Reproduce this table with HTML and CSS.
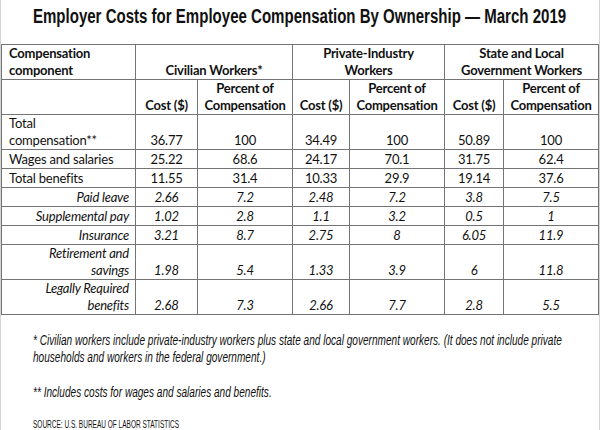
FILE: index.html
```html
<!DOCTYPE html>
<html>
<head>
<meta charset="utf-8">
<link rel="stylesheet" href="styles.css">
</head>
<body>
<div class="page">
  <div class="title-wrap">
    <h1 class="title">Employer Costs for Employee Compensation By Ownership — March 2019</h1>
  </div>
  <table class="grid">
    <colgroup>
      <col class="c-label"><col class="c-cost1"><col class="c-pct"><col class="c-cost2"><col class="c-pct"><col class="c-cost3"><col class="c-pct">
    </colgroup>
    <thead>
      <tr class="h2">
        <th class="lab">Compensation<br>component</th>
        <th colspan="2">Civilian Workers*</th>
        <th colspan="2">Private-Industry<br>Workers</th>
        <th colspan="2">State and Local<br>Government Workers</th>
      </tr>
      <tr class="h2">
        <th></th>
        <th>Cost ($)</th><th>Percent of<br>Compensation</th>
        <th>Cost ($)</th><th>Percent of<br>Compensation</th>
        <th>Cost ($)</th><th>Percent of<br>Compensation</th>
      </tr>
    </thead>
    <tbody>
      <tr class="h2"><td class="lab">Total<br>compensation**</td><td>36.77</td><td>100</td><td>34.49</td><td>100</td><td>50.89</td><td>100</td></tr>
      <tr><td class="lab">Wages and salaries</td><td>25.22</td><td>68.6</td><td>24.17</td><td>70.1</td><td>31.75</td><td>62.4</td></tr>
      <tr><td class="lab">Total benefits</td><td>11.55</td><td>31.4</td><td>10.33</td><td>29.9</td><td>19.14</td><td>37.6</td></tr>
      <tr class="sub"><td class="lab">Paid leave</td><td>2.66</td><td>7.2</td><td>2.48</td><td>7.2</td><td>3.8</td><td>7.5</td></tr>
      <tr class="sub"><td class="lab">Supplemental pay</td><td>1.02</td><td>2.8</td><td>1.1</td><td>3.2</td><td>0.5</td><td>1</td></tr>
      <tr class="sub"><td class="lab">Insurance</td><td>3.21</td><td>8.7</td><td>2.75</td><td>8</td><td>6.05</td><td>11.9</td></tr>
      <tr class="sub h2"><td class="lab">Retirement and<br>savings</td><td>1.98</td><td>5.4</td><td>1.33</td><td>3.9</td><td>6</td><td>11.8</td></tr>
      <tr class="sub h2"><td class="lab">Legally Required<br>benefits</td><td>2.68</td><td>7.3</td><td>2.66</td><td>7.7</td><td>2.8</td><td>5.5</td></tr>
    </tbody>
  </table>
  <div class="notes">
    <p class="note">* Civilian workers include private-industry workers plus state and local government workers. (It does not include private<br>households and workers in the federal government.)</p>
    <p class="note">** Includes costs for wages and salaries and benefits.</p>
    <p class="source">SOURCE: U.S. BUREAU OF LABOR STATISTICS</p>
  </div>
</div>
</body>
</html>
```
FILE: styles.css
```css
html, body {
  margin: 0;
  padding: 0;
  background: #fff;
}
.page {
  width: 600px;
  height: 430px;
  box-sizing: border-box;
  border-left: 1px solid #d4d4d4;
  border-right: 1px solid #d4d4d4;
  overflow: hidden;
  color: #111;
}
.title-wrap {
  height: 44px;
  box-sizing: border-box;
  padding-top: 3px;
  display: flex;
  justify-content: center;
}
.title {
  margin: 0;
  flex: none;
  font-family: "Liberation Sans", Arial, sans-serif;
  font-weight: bold;
  font-size: 20px;
  line-height: 26px;
  white-space: nowrap;
  color: #111;
  transform: scaleX(0.752);
}
.grid {
  width: 598px;
  border-collapse: collapse;
  table-layout: fixed;
  font-family: Lato, "Liberation Sans", sans-serif;
  font-size: 13px;
  letter-spacing: -0.2px;
  line-height: 17px;
}
.c-label { width: 134px; }
.c-cost1 { width: 62px; }
.c-cost2 { width: 57px; }
.c-cost3 { width: 59px; }
.c-pct { width: 95px; }
.grid th, .grid td {
  border: 1px solid #747474;
  padding: 0 2px;
  vertical-align: bottom;
  text-align: center;
  white-space: nowrap;
  height: 18px;
}
.grid tr.h2 th, .grid tr.h2 td { height: 33px; }
.grid th { font-weight: bold; }
.grid th.lab, .grid td.lab {
  text-align: left;
  padding-left: 7px;
}
.grid tr.sub td { font-style: italic; }
.grid tr.sub td.lab {
  text-align: right;
  padding-right: 6px;
}
.notes {
  padding: 17px 0 0 32px;
  font-family: "Liberation Sans", Arial, sans-serif;
  font-style: italic;
  font-size: 14px;
  line-height: 17px;
}
.note {
  margin: 0 0 18px 0;
  white-space: nowrap;
  transform: scaleX(0.72);
  transform-origin: 0 0;
}
.source {
  margin: 0;
  font-style: normal;
  font-size: 10px;
  line-height: 12px;
  white-space: nowrap;
  transform: scaleX(0.65);
  transform-origin: 0 0;
}
```
